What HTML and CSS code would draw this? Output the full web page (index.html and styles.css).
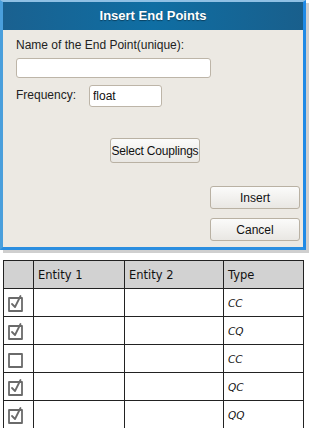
FILE: index.html
```html
<!DOCTYPE html>
<html lang="en">
<head>
  <meta charset="UTF-8" />
  <title>Insert End Points</title>
  <meta name="viewport" content="width=device-width, initial-scale=1.0" />
  <link rel="stylesheet" href="styles.css">
</head>
<body>

  <!-- Dialog -->
  <div class="dialog">
    <div class="title">Insert End Points</div>
    <div class="dialog-body">
      <label class="name-label">Name of the End Point(unique):</label>
      <input type="text" class="name-input">

      <div class="freq-row">
        <label>Frequency:</label>
        <input type="text" class="freq-input" value="float">
      </div>

      <div class="couplings">
        <button class="btn btn-couplings">Select Couplings</button>
      </div>

      <div class="actions">
        <button class="btn btn-action">Insert</button>
        <button class="btn btn-action">Cancel</button>
      </div>
    </div>
  </div>

  <!-- Couplings table -->
  <table class="grid">
    <tr class="head">
      <th class="c-check"></th>
      <th class="c-e1">Entity 1</th>
      <th class="c-e2">Entity 2</th>
      <th class="c-type">Type</th>
    </tr>
    <tr>
      <td><svg class="box" viewBox="0 0 18 18"><rect x="2" y="4" width="13" height="13"/><path d="M5 10 L8 13 L13.5 2"/></svg></td>
      <td></td><td></td><td class="type">CC</td>
    </tr>
    <tr>
      <td><svg class="box" viewBox="0 0 18 18"><rect x="2" y="4" width="13" height="13"/><path d="M5 10 L8 13 L13.5 2"/></svg></td>
      <td></td><td></td><td class="type">CQ</td>
    </tr>
    <tr>
      <td><svg class="box" viewBox="0 0 18 18"><rect x="2" y="4" width="13" height="13"/></svg></td>
      <td></td><td></td><td class="type">CC</td>
    </tr>
    <tr>
      <td><svg class="box" viewBox="0 0 18 18"><rect x="2" y="4" width="13" height="13"/><path d="M5 10 L8 13 L13.5 2"/></svg></td>
      <td></td><td></td><td class="type">QC</td>
    </tr>
    <tr>
      <td><svg class="box" viewBox="0 0 18 18"><rect x="2" y="4" width="13" height="13"/><path d="M5 10 L8 13 L13.5 2"/></svg></td>
      <td></td><td></td><td class="type">QQ</td>
    </tr>
  </table>

</body>
</html>
```

FILE: styles.css
```css
body {
  margin: 0;
  background-color: #fff;
  font-family: "Liberation Sans", Arial, sans-serif;
  font-size: 12px;
  color: #222;
}

/* Dialog */
.dialog {
  width: 300px;
  height: 245px;
  border: 1px solid #4a9fdc;
  border-width: 2px 3px 3px 3px;
  border-top-color: #8fc0e4;
  border-right-color: #1f8ae6;
  border-bottom-color: #2b8ee0;
  background-color: #ece9e3;
  box-shadow: 3px 3px 0 #cfcfcf;
}

.title {
  height: 28px;
  line-height: 27px;
  text-align: center;
  color: #fff;
  font-weight: bold;
  font-size: 13px;
  background: linear-gradient(to right, #1a6190, #0f6ea3 50%, #195f8c);
  text-shadow: 0 1px 1px rgba(0,0,0,0.4);
}

.dialog-body {
  padding: 8px 0 0 13px;
}

.name-label {
  display: block;
  line-height: 14px;
}

input {
  font-family: "Liberation Sans", Arial, sans-serif;
  font-size: 12px;
  border: 1px solid #bdb5a8;
  border-radius: 3px;
  background: #fff;
  box-sizing: border-box;
  padding: 0 3px;
  margin: 0;
  color: #111;
}

.name-input {
  display: block;
  margin-top: 6px;
  width: 195px;
  height: 20px;
}

.freq-row {
  display: flex;
  align-items: center;
  margin-top: 7px;
}

.freq-row label {
  width: 73px;
  margin-top: -2px;
}

.freq-input {
  width: 73px;
  height: 22px;
}

/* Buttons */
.btn {
  font-family: "Liberation Sans", Arial, sans-serif;
  font-size: 12px;
  color: #111;
  border: 1px solid #b9b1a3;
  border-radius: 3px;
  background: linear-gradient(#fbfbfa, #e9e7e3);
  box-sizing: border-box;
  padding: 0;
  margin: 0;
  white-space: nowrap;
}

.couplings {
  padding-left: 94px;
  margin-top: 31px;
}

.btn-couplings {
  width: 90px;
  height: 25px;
  letter-spacing: -0.2px;
}

.actions {
  display: flex;
  flex-direction: column;
  align-items: flex-end;
  gap: 9px;
  padding-right: 3px;
  margin-top: 23px;
}

.btn-action {
  width: 90px;
  height: 23px;
}

/* Table */
.grid {
  margin: 10px 0 0 3px;
  border-collapse: collapse;
  font-family: "DejaVu Sans", sans-serif;
  font-size: 11.5px;
  color: #111;
}

.grid th,
.grid td {
  border: 1.5px solid #222;
  height: 27px;
  padding: 0 0 0 4px;
  text-align: left;
  font-weight: normal;
}

.grid .head th {
  background-color: #d2d2d2;
}

.c-check { width: 25px; }
.c-e1 { width: 86px; }
.c-e2 { width: 94px; }
.c-type { width: 75px; }

.grid td.type {
  font-style: italic;
  font-size: 10.5px;
}

.box {
  display: block;
  width: 18px;
  height: 18px;
  margin-left: -1px;
  fill: none;
  stroke: #6a6a6a;
  stroke-width: 1.8;
  stroke-linejoin: round;
  stroke-linecap: round;
}
```
